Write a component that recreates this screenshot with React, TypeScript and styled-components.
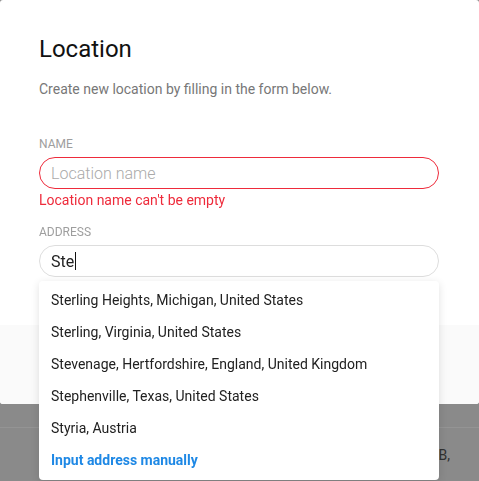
import styled, { createGlobalStyle } from 'styled-components';

const GlobalStyle = createGlobalStyle`
  * { box-sizing: border-box; }
  html, body { margin: 0; padding: 0; }
  body {
    font-family: Roboto, 'Liberation Sans', sans-serif;
    background: #eeeeee;
    overflow: hidden;
  }
`;

const SUGGESTIONS = [
  'Sterling Heights, Michigan, United States',
  'Sterling, Virginia, United States',
  'Stevenage, Hertfordshire, England, United Kingdom',
  'Stephenville, Texas, United States',
  'Styria, Austria',
];

export default function App() {
  return (
    <>
      <GlobalStyle />
      <Page>
        <PageTop />
        <PageRow>
          <span>Baker Street 221B,</span>
        </PageRow>
      </Page>

      <Overlay>
        <Modal>
          <ModalBody>
            <Title>Location</Title>
            <Subtitle>Create new location by filling in the form below.</Subtitle>

            <Field>
              <Label htmlFor='locName'>Name</Label>
              <TextInput id='locName' placeholder='Location name' $error />
              <ErrorText>Location name can't be empty</ErrorText>
            </Field>

            <Field>
              <Label as='span'>Address</Label>
              <AddressBox>
                <FakeInput role='textbox'>
                  Ste
                  <Caret />
                </FakeInput>
                <Suggestions>
                  {SUGGESTIONS.map((s) => (
                    <Suggestion key={s}>{s}</Suggestion>
                  ))}
                  <Suggestion $link>Input address manually</Suggestion>
                </Suggestions>
              </AddressBox>
            </Field>
          </ModalBody>
          <ModalFooter />
        </Modal>
      </Overlay>
    </>
  );
}

const Page = styled.div`
  height: 100vh;
  display: flex;
  flex-direction: column;
`;

const PageTop = styled.div`
  height: 428px;
  border-bottom: 1px solid #ffffff;
`;

const PageRow = styled.div`
  display: flex;
  justify-content: flex-end;
  padding: 17px 29px 0 0;
  font-size: 14px;
  line-height: 20px;
  color: #555555;
`;

const Overlay = styled.div`
  position: fixed;
  inset: 0;
  background: rgba(0, 0, 0, 0.42);
`;

const Modal = styled.div`
  width: 100%;
  background: #ffffff;
  border-radius: 3px;
  display: flex;
  flex-direction: column;
`;

const ModalBody = styled.div`
  display: flex;
  flex-direction: column;
  padding: 35px 40px 48px 39px;
  height: 325px;
`;

const ModalFooter = styled.div`
  height: 79px;
  background: #fafafa;
  border-radius: 0 0 3px 3px;
`;

const Title = styled.h2`
  margin: 0;
  font-size: 24px;
  line-height: 28px;
  font-weight: 400;
  color: #111111;
`;

const Subtitle = styled.p`
  margin: 16px 0 0 0;
  font-size: 14px;
  line-height: 20px;
  color: #777777;
`;

const Field = styled.div`
  display: flex;
  flex-direction: column;
  margin-top: 37px;
  & + & {
    margin-top: 14px;
  }
`;

const Label = styled.label`
  font-size: 12px;
  line-height: 16px;
  text-transform: uppercase;
  color: #9e9e9e;
  margin-bottom: 5px;
`;

const TextInput = styled.input<{ $error?: boolean }>`
  height: 32px;
  width: 100%;
  border: 1px solid ${({ $error }) => ($error ? '#ee2b3b' : '#dddddd')};
  border-radius: 16px;
  padding: 0 11px;
  font-family: inherit;
  font-size: 16px;
  color: #222222;
  outline: none;
  background: #ffffff;

  &::placeholder {
    color: #aaaaaa;
    font-weight: 300;
  }
`;

const ErrorText = styled.div`
  margin-top: 1px;
  font-size: 14px;
  line-height: 20px;
  color: #ee2b3b;
`;

const AddressBox = styled.div`
  position: relative;
`;

const FakeInput = styled.div`
  height: 32px;
  display: flex;
  align-items: center;
  border: 1px solid #dddddd;
  border-radius: 16px;
  padding: 0 11px;
  font-size: 16px;
  color: #222222;
`;

const Caret = styled.span`
  display: inline-block;
  width: 1px;
  height: 18px;
  margin-left: 1px;
  background: #111111;
`;

const Suggestions = styled.ul`
  position: absolute;
  top: calc(100% + 4px);
  left: 0;
  right: 0;
  margin: 0;
  padding: 3px 0 4px 0;
  list-style: none;
  background: #ffffff;
  border-radius: 4px;
  box-shadow: 0 2px 8px rgba(0, 0, 0, 0.12);
  z-index: 10;
`;

const Suggestion = styled.li<{ $link?: boolean }>`
  height: 32px;
  line-height: 32px;
  padding: 0 12px;
  font-size: 14px;
  cursor: pointer;
  white-space: nowrap;
  color: ${({ $link }) => ($link ? '#1e88e5' : '#212121')};
  font-weight: ${({ $link }) => ($link ? 700 : 400)};
`;
